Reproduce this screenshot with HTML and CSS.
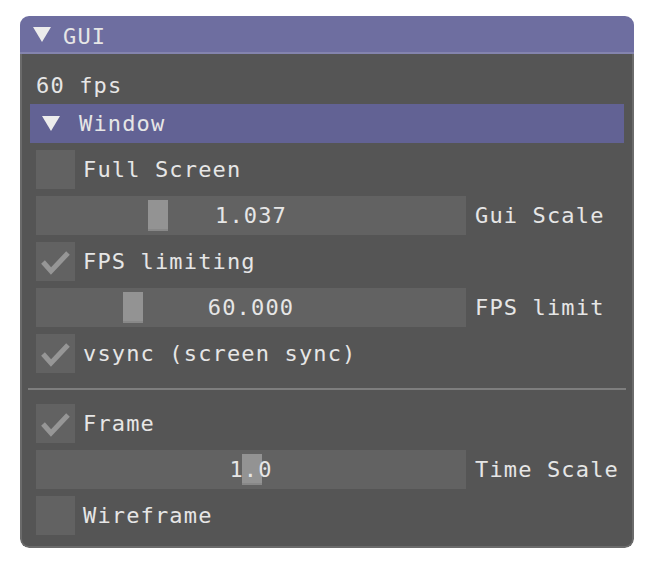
FILE: index.html
```html
<!DOCTYPE html>
<html>
<head>
<meta charset="utf-8">
<title>GUI</title>
<link rel="stylesheet" href="styles.css">
</head>
<body>
<div class="window">
  <div class="titlebar">
    <svg class="arrow" width="18" height="15" viewBox="0 0 18 15"><polygon points="0,0 18,0 9,15"/></svg>
    <span class="title">GUI</span>
  </div>
  <div class="content">
    <div class="text-row">60 fps</div>
    <div class="header">
      <svg class="arrow" width="18" height="15" viewBox="0 0 18 15"><polygon points="0,0 18,0 9,15"/></svg>
      <span class="header-label">Window</span>
    </div>
    <div class="row">
      <div class="checkbox"></div>
      <span class="label">Full Screen</span>
    </div>
    <div class="row">
      <div class="slider">
        <div class="grab" style="left:112px"></div>
        <span class="value">1.037</span>
      </div>
      <span class="slider-label">Gui Scale</span>
    </div>
    <div class="row">
      <div class="checkbox"><svg class="check" width="39" height="39" viewBox="0 0 39 39"><polyline points="7,20 15,29 32,11"/></svg></div>
      <span class="label">FPS limiting</span>
    </div>
    <div class="row">
      <div class="slider">
        <div class="grab" style="left:87px"></div>
        <span class="value">60.000</span>
      </div>
      <span class="slider-label">FPS limit</span>
    </div>
    <div class="row">
      <div class="checkbox"><svg class="check" width="39" height="39" viewBox="0 0 39 39"><polyline points="7,20 15,29 32,11"/></svg></div>
      <span class="label">vsync (screen sync)</span>
    </div>
    <div class="separator"></div>
    <div class="row">
      <div class="checkbox"><svg class="check" width="39" height="39" viewBox="0 0 39 39"><polyline points="7,20 15,29 32,11"/></svg></div>
      <span class="label">Frame</span>
    </div>
    <div class="row">
      <div class="slider">
        <div class="grab" style="left:206px"></div>
        <span class="value">1.0</span>
      </div>
      <span class="slider-label">Time Scale</span>
    </div>
    <div class="row">
      <div class="checkbox"></div>
      <span class="label">Wireframe</span>
    </div>
  </div>
</div>
</body>
</html>
```

FILE: styles.css
```css
html, body {
  margin: 0;
  padding: 0;
  background: #ffffff;
}

body {
  font-family: "DejaVu Sans Mono", "Liberation Mono", monospace;
  font-size: 22px;
  letter-spacing: 1.15px;
  color: #e6e6e6;
}

.window {
  margin: 16px 0 0 20px;
  width: 614px;
  border-radius: 9px;
  overflow: hidden;
}

.titlebar {
  height: 36px;
  background: #6e6ea0;
  border-bottom: 2px solid #8484ae;
  display: flex;
  align-items: center;
  padding-left: 13px;
}

.arrow {
  display: block;
  flex: none;
}

.arrow polygon {
  fill: #ececec;
}

.title {
  margin-left: 12px;
  margin-top: 6px;
  line-height: 30px;
}

.content {
  background: #555555;
  border: 2px solid #6b6b6b;
  border-top: none;
  border-radius: 0 0 9px 9px;
  padding: 17px 14px 11px 14px;
  display: flex;
  flex-direction: column;
  gap: 7px;
}

.text-row {
  box-sizing: border-box;
  height: 26px;
  padding-top: 3px;
  line-height: 23px;
}

.header {
  margin: 0 -6px;
  height: 39px;
  background: #626294;
  display: flex;
  align-items: center;
  padding-left: 12px;
}

.header-label {
  margin-left: 19px;
  line-height: 39px;
}

.row {
  display: flex;
  align-items: center;
  height: 39px;
  white-space: nowrap;
}

.checkbox {
  width: 39px;
  height: 39px;
  background: #626262;
  flex: none;
}

.check {
  display: block;
}

.check polyline {
  fill: none;
  stroke: #969696;
  stroke-width: 5;
  stroke-linecap: butt;
  stroke-linejoin: miter;
}

.label {
  margin-left: 8px;
  line-height: 39px;
}

.slider {
  position: relative;
  width: 430px;
  height: 39px;
  background: #626262;
  flex: none;
  display: flex;
  align-items: center;
  justify-content: center;
}

.grab {
  position: absolute;
  top: 4px;
  width: 20px;
  height: 29px;
  background: #939393;
  border-bottom: 2px solid #888888;
}

.value {
  position: relative;
  line-height: 39px;
}

.slider-label {
  margin-left: 9px;
  line-height: 39px;
}

.separator {
  margin: 8px -8px 7px -8px;
  height: 2px;
  background: #7e7e7e;
}
```
